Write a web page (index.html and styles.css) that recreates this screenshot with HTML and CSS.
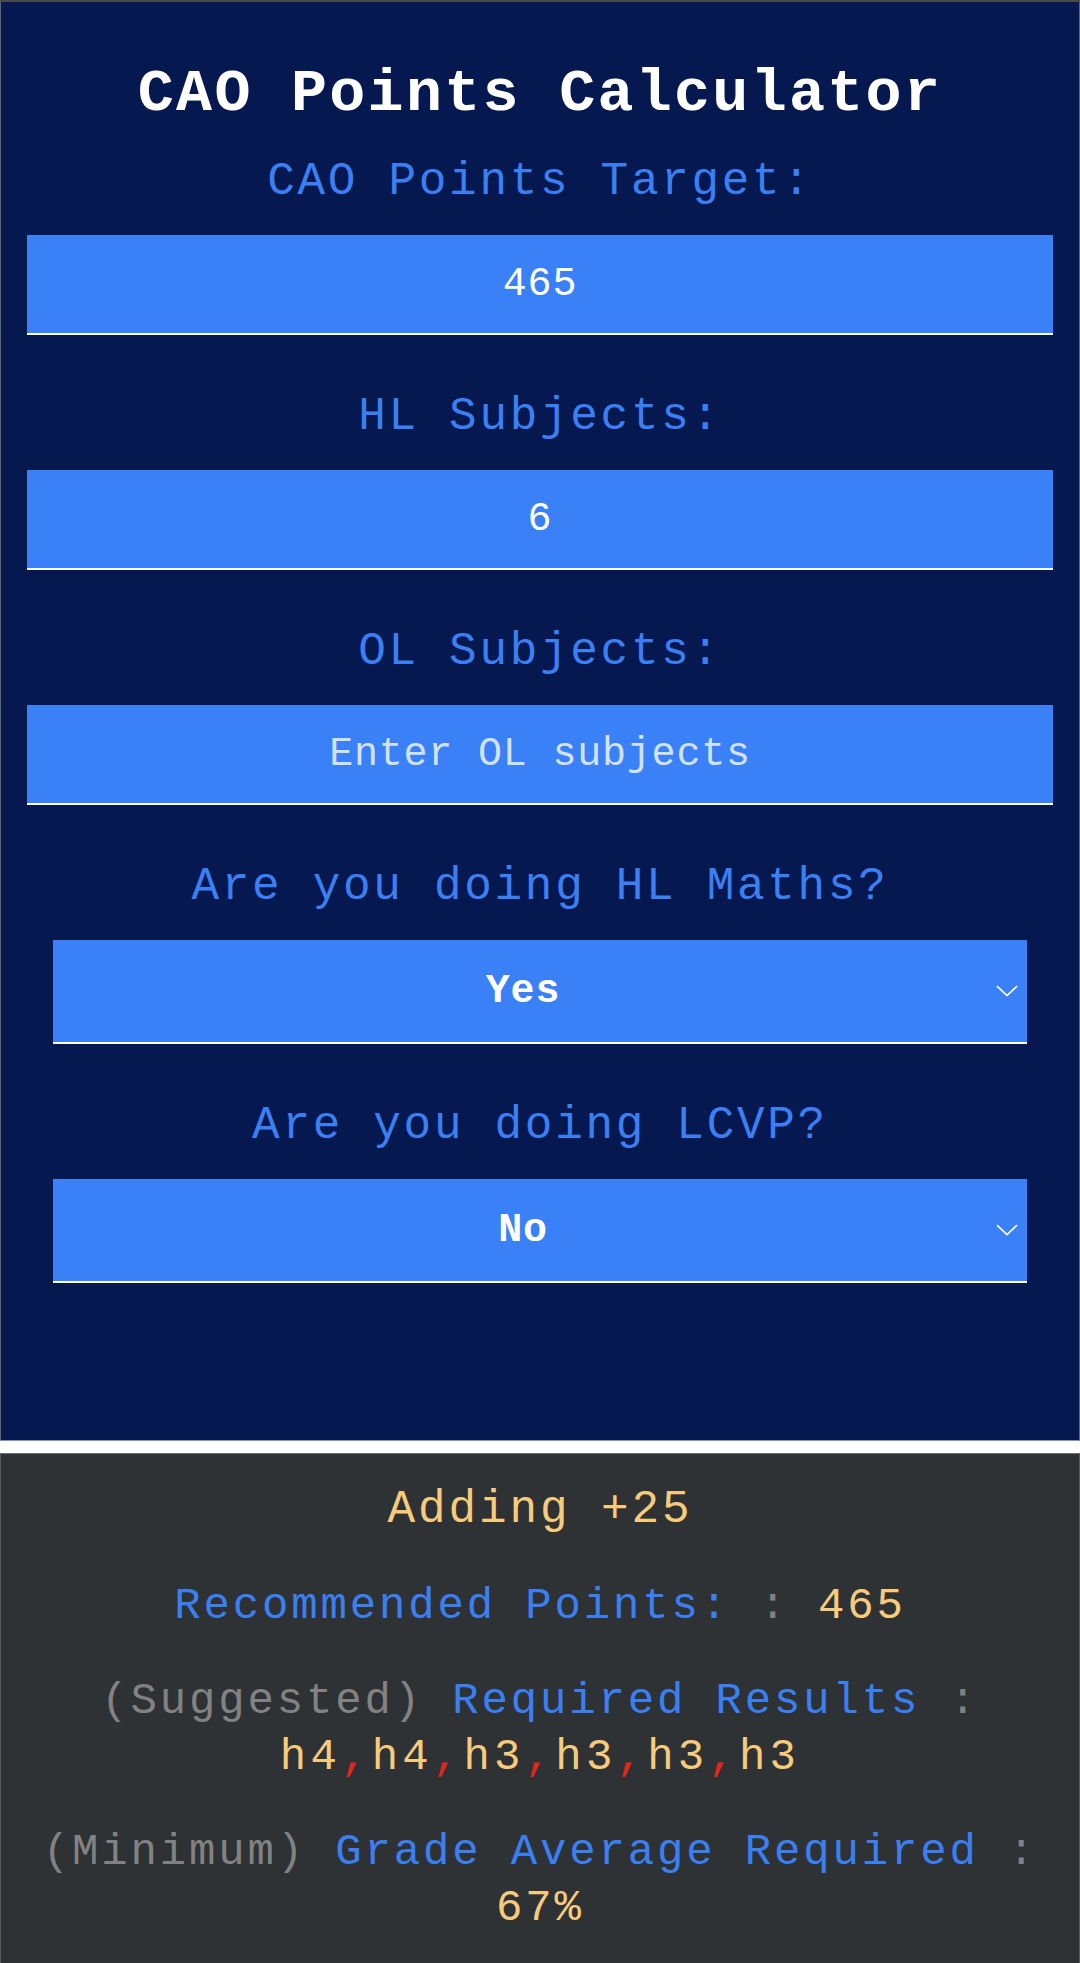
FILE: index.html
```html
<!DOCTYPE html>
<html lang="en">
<head>
<meta charset="utf-8">
<title>CAO Points Calculator</title>
<link rel="stylesheet" href="styles.css">
</head>
<body>
<main class="calc">
  <h1 class="title">CAO Points Calculator</h1>

  <div class="field">
    <label class="label" for="target">CAO Points Target:</label>
    <input class="box" id="target" type="text" value="465">
  </div>

  <div class="field">
    <label class="label" for="hl">HL Subjects:</label>
    <input class="box" id="hl" type="text" value="6">
  </div>

  <div class="field">
    <label class="label" for="ol">OL Subjects:</label>
    <input class="box" id="ol" type="text" placeholder="Enter OL subjects">
  </div>

  <div class="field">
    <label class="label" for="maths">Are you doing HL Maths?</label>
    <div class="select-wrap">
      <select class="box select" id="maths">
        <option selected>Yes</option>
        <option>No</option>
      </select>
      <svg class="chevron" width="22" height="12" viewBox="0 0 22 12"><path d="M1 1.2 L11 10.6 L21 1.2" fill="none" stroke="#ffffff" stroke-width="1.6"/></svg>
    </div>
  </div>

  <div class="field">
    <label class="label" for="lcvp">Are you doing LCVP?</label>
    <div class="select-wrap">
      <select class="box select" id="lcvp">
        <option>Yes</option>
        <option selected>No</option>
      </select>
      <svg class="chevron" width="22" height="12" viewBox="0 0 22 12"><path d="M1 1.2 L11 10.6 L21 1.2" fill="none" stroke="#ffffff" stroke-width="1.6"/></svg>
    </div>
  </div>
</main>

<section class="results">
  <p class="adding">Adding +25</p>
  <p class="line"><span class="blue">Recommended Points:</span> <span class="gray">:</span> <span class="yellow">465</span></p>
  <p class="line"><span class="gray">(Suggested)</span> <span class="blue">Required Results</span> <span class="gray">:</span> <span class="grades">h4<span class="comma">,</span>h4<span class="comma">,</span>h3<span class="comma">,</span>h3<span class="comma">,</span>h3<span class="comma">,</span>h3</span></p>
  <p class="line"><span class="gray">(Minimum)</span> <span class="blue">Grade Average Required</span> <span class="gray">:</span> <span class="yellow">67%</span></p>
</section>
</body>
</html>
```

FILE: styles.css
```css
html, body {
  margin: 0;
  padding: 0;
  background: #ffffff;
}

body {
  font-family: "Liberation Mono", "Courier New", monospace;
}

.calc {
  background: #061850;
  border-top: 2px solid #4a4a4a;
  border-left: 1px solid #5a6378;
  border-right: 1px solid #5a6378;
  border-bottom: 1px solid #8a93a8;
  padding: 57px 26px 157px;
  display: flex;
  flex-direction: column;
}

.title {
  margin: 0 0 25px;
  font-size: 60px;
  line-height: 70px;
  font-weight: bold;
  letter-spacing: 2.3px;
  color: #ffffff;
  text-align: center;
}

.field {
  display: flex;
  flex-direction: column;
}

.field + .field {
  margin-top: 54px;
}

.label {
  display: block;
  margin-bottom: 25px;
  font-size: 46px;
  line-height: 56px;
  letter-spacing: 2.7px;
  color: #3b80f3;
  text-align: center;
}

.box {
  display: block;
  box-sizing: border-box;
  width: 100%;
  height: 100px;
  margin: 0;
  padding: 0;
  border: none;
  border-bottom: 2px solid #ffffff;
  border-radius: 0;
  background: #3a80f6;
  color: #ffffff;
  font-family: "Liberation Mono", "Courier New", monospace;
  font-size: 40px;
  font-weight: normal;
  letter-spacing: 0.8px;
  text-align: center;
  outline: none;
  -webkit-appearance: none;
  appearance: none;
}

.box::placeholder {
  color: #d3e2fc;
  opacity: 1;
}

.select-wrap {
  position: relative;
  margin: 0 26px;
}

.select {
  height: 104px;
  padding: 0 34px 0 0;
  font-weight: bold;
  text-align: center;
  text-align-last: center;
}

.chevron {
  position: absolute;
  right: 9px;
  top: 45px;
  pointer-events: none;
}

.results {
  margin-top: 12px;
  background: #2e3235;
  border-top: 1px solid #6c6f72;
  border-left: 1px solid #55595c;
  border-right: 1px solid #55595c;
  padding: 28px 8px 60px;
  text-align: center;
}

.adding {
  margin: 0 0 40px;
  font-size: 46px;
  line-height: 56px;
  letter-spacing: 2.9px;
  color: #f7cb7c;
}

.line {
  margin: 0 0 39px;
  font-size: 44px;
  line-height: 56px;
  letter-spacing: 2.85px;
}

.blue {
  color: #3b80f3;
}

.gray {
  color: #828282;
}

.yellow {
  color: #f7cb7c;
}

.grades {
  color: #f7cb7c;
  letter-spacing: 4.2px;
}

.comma {
  color: #e3261c;
}
```
